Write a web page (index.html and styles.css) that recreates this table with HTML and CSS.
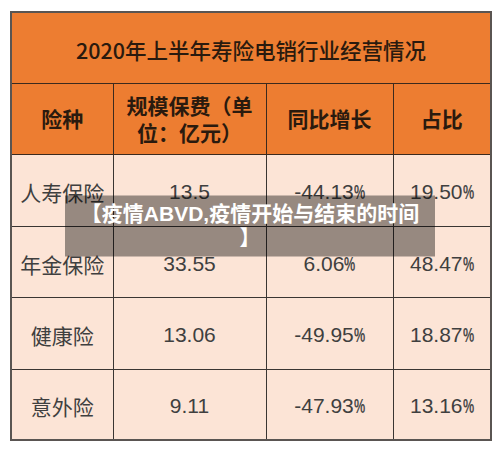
FILE: index.html
```html
<!DOCTYPE html>
<html lang="zh-CN">
<head>
<meta charset="utf-8">
<title>2020年上半年寿险电销行业经营情况</title>
<link rel="stylesheet" href="styles.css">
</head>
<body>
<div class="page">
  <table class="report">
    <colgroup>
      <col class="c1"><col class="c2"><col class="c3"><col class="c4">
    </colgroup>
    <thead>
      <tr class="title-row"><th colspan="4">2020年上半年寿险电销行业经营情况</th></tr>
      <tr class="head-row">
        <th>险种</th>
        <th>规模保费（单位：亿元）</th>
        <th>同比增长</th>
        <th>占比</th>
      </tr>
    </thead>
    <tbody>
      <tr class="r1">
        <td class="name">人寿保险</td>
        <td class="num">13.5</td>
        <td class="num">-44.13<span class="pct">%</span></td>
        <td class="num">19.50<span class="pct">%</span></td>
      </tr>
      <tr class="r2">
        <td class="name">年金保险</td>
        <td class="num">33.55</td>
        <td class="num">6.06<span class="pct">%</span></td>
        <td class="num">48.47<span class="pct">%</span></td>
      </tr>
      <tr class="r3">
        <td class="name">健康险</td>
        <td class="num">13.06</td>
        <td class="num">-49.95<span class="pct">%</span></td>
        <td class="num">18.87<span class="pct">%</span></td>
      </tr>
      <tr class="r4">
        <td class="name">意外险</td>
        <td class="num">9.11</td>
        <td class="num">-47.93<span class="pct">%</span></td>
        <td class="num">13.16<span class="pct">%</span></td>
      </tr>
    </tbody>
  </table>
  <div class="caption">【疫情ABVD,疫情开始与结束的时间<span class="close-mark">】</span></div>
</div>
</body>
</html>
```

FILE: styles.css
```css
html, body {
  margin: 0;
  padding: 0;
  background: #ffffff;
}

.page {
  position: relative;
  width: 500px;
  height: 452px;
  padding: 11px 10px 0 10px;
  box-sizing: border-box;
  overflow: hidden;
}

.report {
  width: 480px;
  table-layout: fixed;
  border-collapse: collapse;
  border: 2px solid #5a5552;
  font-family: "Noto Sans CJK SC", sans-serif;
}

.c1 { width: 102px; }
.c2 { width: 153px; }
.c3 { width: 127px; }
.c4 { width: 98px; }

.report th,
.report td {
  border: 1px solid #3a3532;
  text-align: center;
  vertical-align: middle;
  padding: 0 6px;
}

.report th {
  background: #ed7d31;
  color: #2a1a0e;
  border-color: #3b2a1e;
}

.title-row { height: 71px; }
.head-row { height: 71px; }
.r1, .r3 { height: 72px; }
.r2, .r4 { height: 71px; }

.title-row th {
  font-size: 21.5px;
  font-weight: 500;
  padding-top: 4px;
}

.head-row th {
  font-size: 21px;
  font-weight: 700;
  line-height: 27px;
}

.report td {
  background: #fce4d6;
  color: #3f3f3f;
  padding-top: 4px;
}

.name {
  font-size: 21px;
  font-weight: 400;
}

.num {
  font-family: "Liberation Sans", Arial, sans-serif;
  font-size: 21px;
  color: #474747;
}

.pct {
  display: inline-block;
  width: 11px;
  transform: scaleX(0.6);
  transform-origin: left center;
  font-weight: 700;
  color: #4a4a4a;
}

.caption {
  position: absolute;
  left: 50%;
  top: 50%;
  transform: translate(-50%, -50%);
  width: 370px;
  box-sizing: border-box;
  padding: 6px 8px 7px 8px;
  background: rgba(0, 0, 0, 0.4);
  color: #ffffff;
  font-family: "Liberation Sans", "Noto Sans CJK SC", sans-serif;
  font-size: 21px;
  font-weight: 700;
  line-height: 24px;
  text-align: center;
  text-spacing-trim: space-all;
}

.close-mark {
  display: inline-block;
}
```
